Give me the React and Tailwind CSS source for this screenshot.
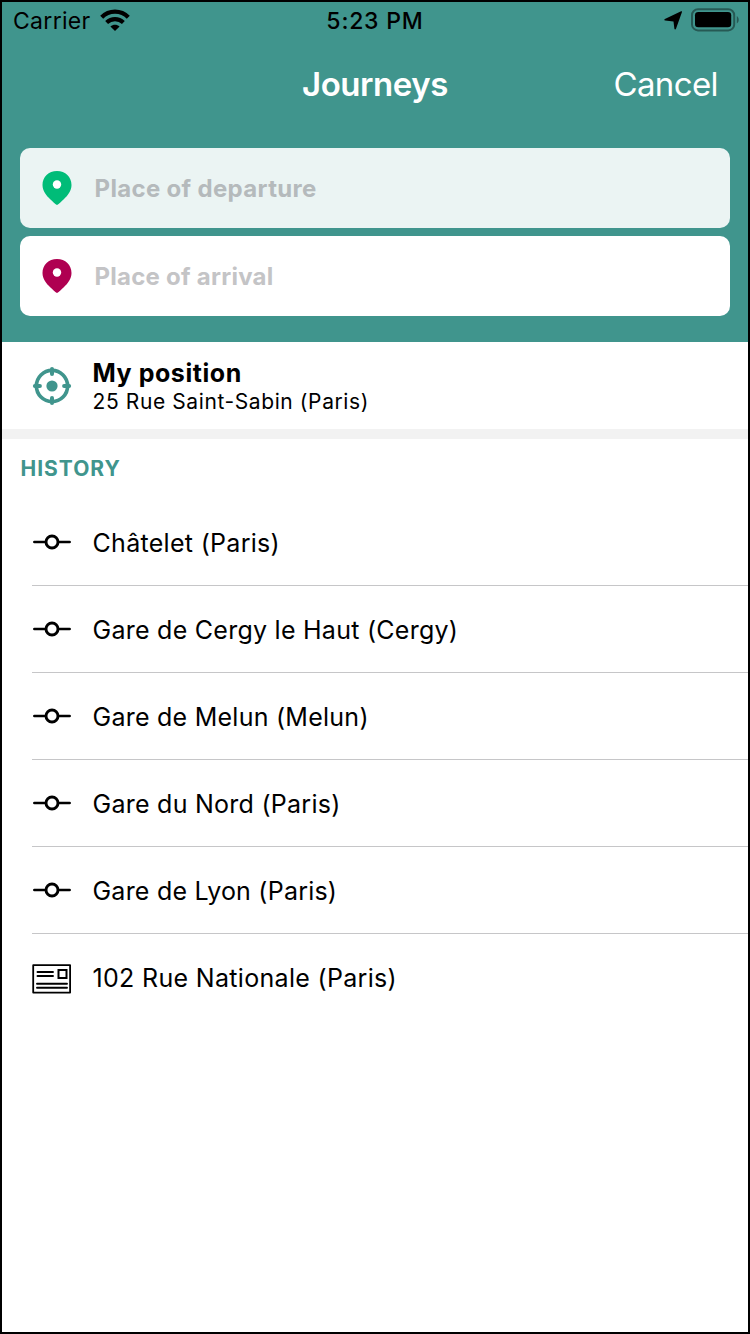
import React from "react";

function Pin({ className }) {
  return (
    <svg className={`block shrink-0 ${className}`} width="30" height="34" viewBox="0 0 30 34">
      <path fill="currentColor" fillRule="evenodd" d="M15 0C6.600 0 .5 6 .5 14c0 6 4 10.800 7.700 14.200 2.200 2 4.700 4.600 6.800 5.800 2.100-1.200 4.600-3.800 6.800-5.800C25.500 24.800 29.500 20 29.500 14 29.500 6 23.400 0 15 0Z" />
      <circle cx="15" cy="13.500" r="4.200" fill="white" />
    </svg>
  );
}

function Target() {
  return (
    <svg className="block shrink-0 text-[#40958d]" width="40" height="40" viewBox="0 0 40 40" fill="none" stroke="currentColor">
      <circle cx="20" cy="20" r="15.600" strokeWidth="3.700" />
      <circle cx="20" cy="20" r="5.600" fill="currentColor" stroke="none" />
      <path strokeWidth="4" strokeLinecap="round" d="M20 2.900v5M20 32.100v5M2.900 20h5M32.100 20h5" />
    </svg>
  );
}

function Stop() {
  return (
    <svg className="block shrink-0" width="40" height="16" viewBox="0 0 40 16" fill="none" stroke="black" strokeLinecap="round">
      <circle cx="20" cy="8" r="6" strokeWidth="2.900" />
      <path strokeWidth="2.700" d="M2.400 8H13M27 8h10.600" />
    </svg>
  );
}

function Address() {
  return (
    <svg className="mt-[3px] block shrink-0" width="40" height="30" viewBox="0 0 40 30" fill="none" stroke="black">
      <path strokeWidth="1.800" strokeLinejoin="round" d="M1.200 1.200h36.900v27.400H1.200z" />
      <path strokeWidth="2" d="M26.500 6h8v8h-8z" />
      <path strokeWidth="1.900" strokeLinecap="round" d="M5.500 8h15.500M5.500 12h15.500M5 19.800h30M5 23.800h30" />
    </svg>
  );
}

const places = [
  { name: "Châtelet (Paris)", track: "tracking-[0.3px]" },
  { name: "Gare de Cergy le Haut (Cergy)", track: "tracking-[0.26px]" },
  { name: "Gare de Melun (Melun)", track: "tracking-[0.25px]" },
  { name: "Gare du Nord (Paris)", track: "tracking-[0.26px]" },
  { name: "Gare de Lyon (Paris)", track: "tracking-[0.22px]" },
  { name: "102 Rue Nationale (Paris)", track: "tracking-[0.32px]", address: true },
];

export default function App() {
  return (
    <div className="flex h-[1334px] w-[750px] flex-col border-2 border-black bg-white font-['Inter',sans-serif] text-black">
      <header className="h-[340px] shrink-0 bg-[#40958d]">
        <div className="grid h-9 grid-cols-3 items-center pl-[11px] text-[23px] leading-[34px]">
          <div className="flex items-center gap-[9px]">
            <span className="pt-0.5 tracking-[0.3px]">Carrier</span>
            <svg width="30" height="22" viewBox="0 0 30 22" fill="none" stroke="black">
              <path strokeWidth="4.200" d="M1.700 8.200C9 .800 21 .800 28.300 8.200" />
              <path strokeWidth="4.200" d="M6.600 13.500c4.800-4.400 12-4.400 16.800 0" />
              <path fill="black" stroke="none" d="M10.400 17.600c2.800-2.400 6.400-2.400 9.200 0L15 22z" />
            </svg>
          </div>
          <span className="-ml-[11px] pt-0.5 text-center font-medium tracking-[0.8px]">5:23 PM</span>
          <div className="flex items-center justify-end gap-2 pr-[9px]">
            <svg width="20" height="20" viewBox="0 0 20 20">
              <path d="M18.100 1.300c.7-.3 1.100.2.800.9l-5.900 16.600c-.3.900-1.500.9-1.600-.1L10.500 11.400l-8.400-.9c-1-.1-1.100-1.200-.2-1.600z" />
            </svg>
            <svg width="48" height="24" viewBox="0 0 48 24">
              <rect x="1" y="1.200" width="42.200" height="21.200" rx="6" fill="none" stroke="black" strokeOpacity=".4" strokeWidth="2" />
              <rect x="4" y="4" width="36.200" height="15.300" rx="3.300" />
              <path fillOpacity=".4" d="M45.800 8c2.600 1.600 2.600 6 0 7.600z" />
            </svg>
          </div>
        </div>
        <div className="grid h-[92px] grid-cols-3 items-center px-[30px] pt-0.5 text-white">
          <h1 className="col-start-2 text-center text-[33px] font-semibold tracking-[-0.45px]">Journeys</h1>
          <button className="text-right text-[33px] tracking-[-0.6px]">Cancel</button>
        </div>
        <div className="flex flex-col gap-2 px-[18px] pt-[18px] text-[24px] font-bold">
          <div className="flex h-20 items-center gap-[22.500px] rounded-[10px] bg-[#ebf4f3] pl-[22px]">
            <Pin className="text-[#00bc78]" />
            <span className="pt-0.5 tracking-[0.33px] text-[#b5babc]">Place of departure</span>
          </div>
          <div className="flex h-20 items-center gap-[22.500px] rounded-[10px] bg-white pl-[22px]">
            <Pin className="text-[#af0051]" />
            <span className="pt-0.5 tracking-[0.25px] text-[#c4c4c6]">Place of arrival</span>
          </div>
        </div>
      </header>
      <section className="flex h-[87px] shrink-0 items-center gap-[20.500px] pl-[30px]">
        <Target />
        <div className="pt-px">
          <div className="text-[25px] leading-[30px] font-bold tracking-[0.55px]">My position</div>
          <div className="pt-px text-[21px] leading-[26px] tracking-[0.6px]">25 Rue Saint-Sabin (Paris)</div>
        </div>
      </section>
      <div className="h-2.5 shrink-0 bg-[#f2f2f2]" />
      <h2 className="h-[60px] shrink-0 pl-[18.500px] text-[21px] leading-[59px] font-bold tracking-[1px] text-[#40958d]">HISTORY</h2>
      <ul className="pl-[30px]">
        {places.map((p) => (
          <li key={p.name} className="flex h-[87px] items-center gap-[20.500px] border-b border-[#c6c6c8] text-[25px] last:border-transparent">
            {p.address ? <Address /> : <Stop />}
            <span className={`pt-[3px] ${p.track}`}>{p.name}</span>
          </li>
        ))}
      </ul>
    </div>
  );
}
